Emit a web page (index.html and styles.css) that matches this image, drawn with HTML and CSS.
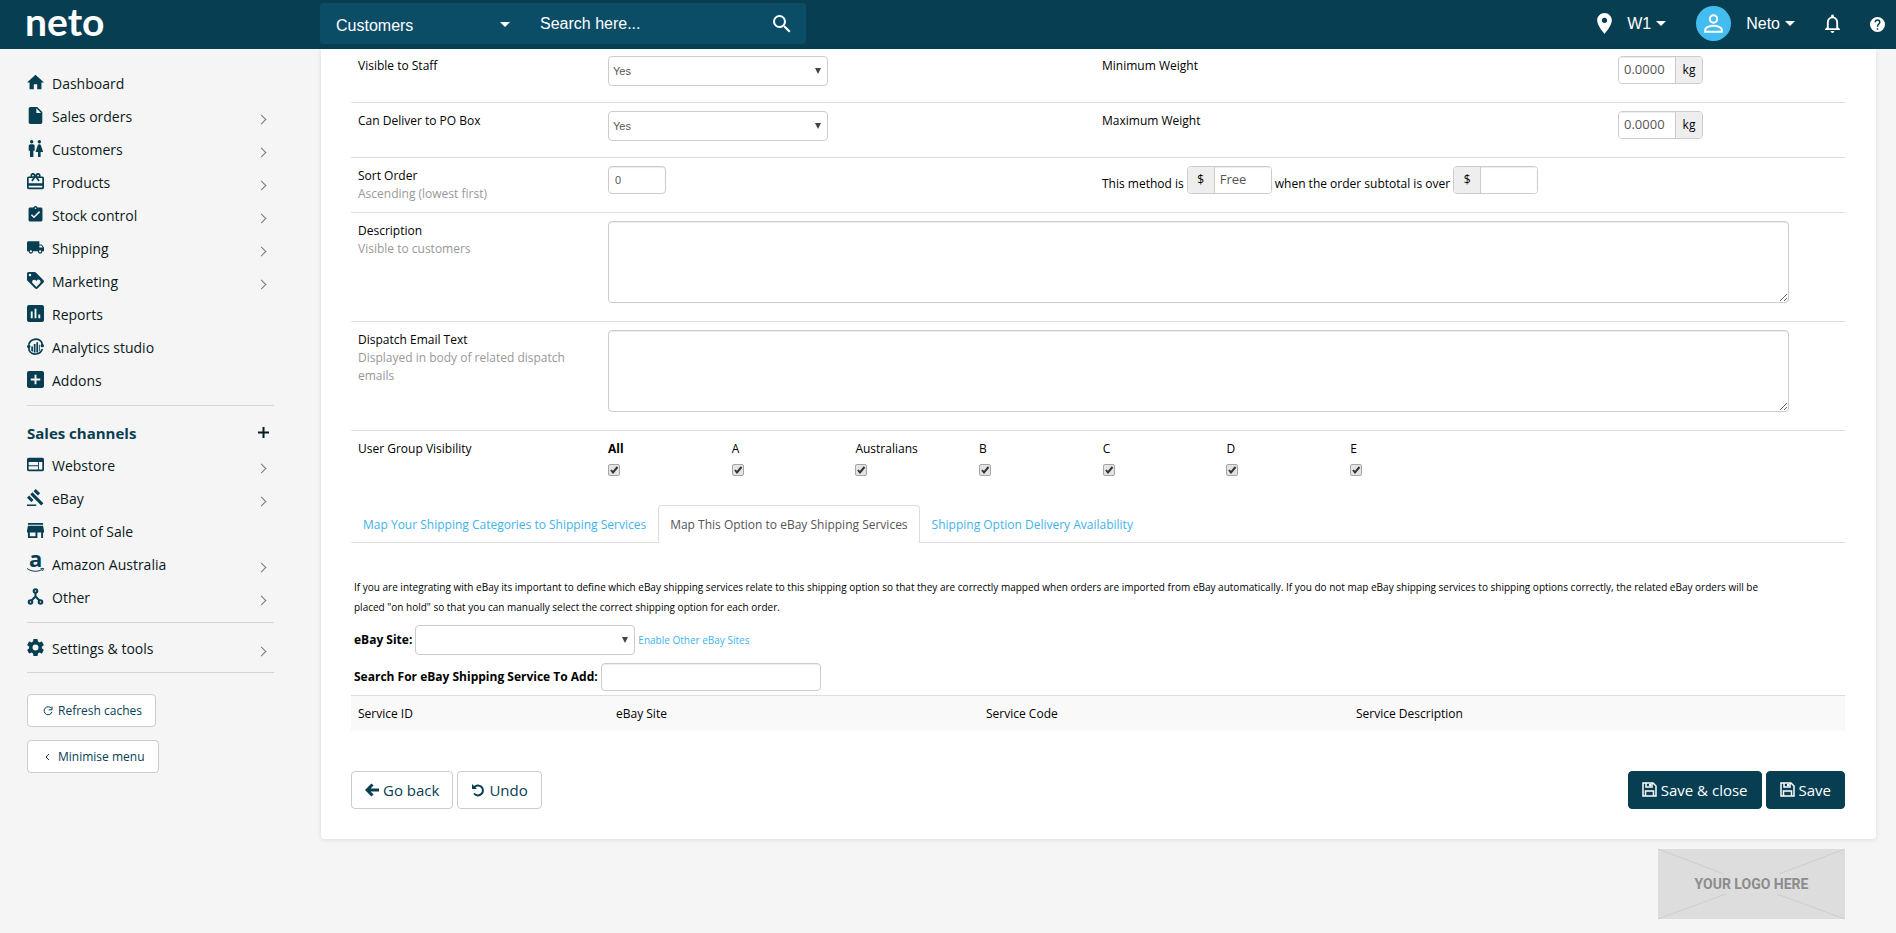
FILE: index.html
```html
<!DOCTYPE html>
<html lang="en">
<head>
  <meta charset="UTF-8">
  <meta name="viewport" content="width=device-width, initial-scale=1.0">
  <title>Neto - Shipping Option</title>
  <link rel="stylesheet" href="styles.css">
</head>
<body>
  <!-- Top bar -->
  <header class="topbar">
    <a href="#" class="brand">neto</a>
    <form class="search">
      <select class="search-type" aria-label="Search in">
        <option>Customers</option>
      </select>
      <input type="text" class="search-input" placeholder="Search here..." aria-label="Search">
      <button type="button" class="search-btn" aria-label="Search">
        <svg width="18" height="18" viewBox="3 3 18 18" fill="#fff"><path d="M15.5 14h-.79l-.28-.27A6.47 6.47 0 0 0 16 9.500 6.500 6.500 0 1 0 9.500 16c1.610 0 3.090-.590 4.230-1.570l.270.280v.790l5 4.990L20.490 19l-4.990-5zm-6 0C7.010 14 5 11.990 5 9.500S7.010 5 9.500 5 14 7.010 14 9.500 11.990 14 9.500 14z"/></svg>
      </button>
    </form>
    <nav class="top-nav">
      <a href="#" class="top-link warehouse">
        <svg width="15" height="21" viewBox="5 2 14 20" fill="#fff"><path d="M12 2C8.130 2 5 5.130 5 9c0 5.250 7 13 7 13s7-7.750 7-13c0-3.870-3.130-7-7-7zm0 9.500a2.500 2.500 0 1 1 0-5 2.500 2.500 0 0 1 0 5z"/></svg>
        <span>W1<i class="caret"></i></span>
      </a>
      <a href="#" class="top-link account">
        <span class="avatar">
          <svg width="19" height="19" viewBox="0 0 19 19" fill="none" stroke="#fff" stroke-width="2"><circle cx="9.500" cy="5" r="3.700"/><path d="M1.200 17.800v-2c0-2.600 4.800-4 8.300-4s8.300 1.400 8.300 4v2z"/></svg>
        </span>
        <span>Neto<i class="caret"></i></span>
      </a>
      <a href="#" class="top-link bell" aria-label="Notifications">
        <svg width="15" height="19" viewBox="4 2 16 20" fill="#fff"><path d="M12 22c1.100 0 2-.900 2-2h-4c0 1.100.900 2 2 2zm6-6v-5c0-3.070-1.630-5.640-4.500-6.320V4a1.500 1.500 0 0 0-3 0v.680C7.640 5.360 6 7.920 6 11v5l-2 2v1h16v-1l-2-2zm-2 1H8v-6c0-2.480 1.510-4.500 4-4.500s4 2.020 4 4.500v6z"/></svg>
      </a>
      <a href="#" class="top-link help" aria-label="Help">
        <svg width="15" height="15" viewBox="2 2 20 20" fill="#fff"><path d="M12 2a10 10 0 1 0 0 20 10 10 0 0 0 0-20zm1 17h-2v-2h2v2zm2.070-7.750-.900.920C13.450 12.900 13 13.500 13 15h-2v-.500c0-1.100.450-2.100 1.170-2.830l1.240-1.260c.370-.360.590-.860.590-1.410a2 2 0 0 0-4 0H8a4 4 0 0 1 8 0c0 .880-.360 1.680-.930 2.250z"/></svg>
      </a>
    </nav>
  </header>

  <div class="layout">
    <!-- Side menu -->
    <aside class="sidebar">
      <ul class="menu">
        <li><a href="#"><svg viewBox="2 2 20 20"><path d="M10 20v-6h4v6h5v-8h3L12 3 2 12h3v8z"/></svg>Dashboard</a></li>
        <li><a href="#" class="more"><svg viewBox="2 2 20 20"><path d="M6 2c-1.100 0-2 .900-2 2v16c0 1.100.900 2 2 2h12c1.100 0 2-.900 2-2V8l-6-6H6zm7 7V3.500L18.500 9H13z"/></svg>Sales orders</a></li>
        <li><a href="#" class="more"><svg viewBox="2 2 20 20"><path d="M5.500 22v-7.500H4V9c0-1.100.900-2 2-2h3c1.100 0 2 .900 2 2v5.500H9.500V22h-4zM18 22v-6h3l-2.540-7.630A2.010 2.010 0 0 0 16.560 7h-.120a2 2 0 0 0-1.900 1.370L12 16h3v6h3zM7.500 6a2 2 0 1 0 0-4 2 2 0 0 0 0 4zm9 0a2 2 0 1 0 0-4 2 2 0 0 0 0 4z"/></svg>Customers</a></li>
        <li><a href="#" class="more"><svg viewBox="2 2 20 20"><path d="M20 6h-2.180c.110-.310.180-.650.180-1a3 3 0 0 0-5.500-1.650l-.500.670-.500-.680A3 3 0 0 0 6 5c0 .350.070.690.180 1H4c-1.110 0-1.990.890-1.990 2L2 19c0 1.110.890 2 2 2h16c1.110 0 2-.890 2-2V8c0-1.110-.890-2-2-2zm-5-2a1 1 0 1 1 0 2 1 1 0 0 1 0-2zM9 4a1 1 0 1 1 0 2 1 1 0 0 1 0-2zm11 15H4v-2h16v2zm0-5H4V8h5.080L7 10.830 8.620 12 11 8.760l1-1.360 1 1.360L15.380 12 17 10.830 14.920 8H20v6z"/></svg>Products</a></li>
        <li><a href="#" class="more"><svg viewBox="1 1 22 22"><path d="M19 3h-4.180a3 3 0 0 0-5.640 0H5c-1.100 0-2 .900-2 2v14c0 1.100.900 2 2 2h14c1.100 0 2-.900 2-2V5c0-1.100-.900-2-2-2zm-7 0a1 1 0 1 1 0 2 1 1 0 0 1 0-2zm-2 14-4-4 1.410-1.410L10 14.170l6.590-6.590L18 9l-8 8z"/></svg>Stock control</a></li>
        <li><a href="#" class="more"><svg viewBox="1 1 22 22"><path d="M20 8h-3V4H3c-1.100 0-2 .900-2 2v11h2a3 3 0 0 0 6 0h6a3 3 0 0 0 6 0h2v-5l-3-4zM6 18.500a1.500 1.500 0 1 1 0-3 1.500 1.500 0 0 1 0 3zm13.500-9 1.960 2.500H17V9.500h2.500zm-1.500 9a1.500 1.500 0 1 1 0-3 1.500 1.500 0 0 1 0 3z"/></svg>Shipping</a></li>
        <li><a href="#" class="more"><svg viewBox="2 2 20 20"><path d="m21.410 11.580-9-9C12.050 2.220 11.550 2 11 2H4c-1.100 0-2 .900-2 2v7c0 .550.220 1.050.590 1.420l9 9c.360.360.860.580 1.410.580s1.050-.220 1.410-.590l7-7c.370-.360.590-.860.590-1.410s-.230-1.060-.590-1.420zM5.500 7a1.500 1.500 0 1 1 0-3 1.500 1.500 0 0 1 0 3zm11.770 8.270L13 19.540l-4.270-4.270A2.500 2.500 0 0 1 10.500 11c.690 0 1.320.280 1.770.740l.730.720.730-.730a2.500 2.500 0 0 1 3.540 3.540z"/></svg>Marketing</a></li>
        <li><a href="#"><svg viewBox="3 3 18 18"><path d="M19 3H5c-1.100 0-2 .900-2 2v14c0 1.100.900 2 2 2h14c1.100 0 2-.900 2-2V5c0-1.100-.900-2-2-2zM9 17H7v-7h2v7zm4 0h-2V7h2v10zm4 0h-2v-4h2v4z"/></svg>Reports</a></li>
        <li><a href="#"><svg viewBox="2 2 20 20"><path d="M7 12h2v6H8l-1-1zM10 9h2v10h-2zM13 7h2v12h-2zM16 10h1v7l-1 1z"/><path d="M4 10a8.500 8.500 0 0 1 15.500-2.500L20 12M20 15a8.500 8.500 0 0 1-15.500 1.500L4 12" fill="none" stroke="#073e52" stroke-width="2"/><circle cx="4" cy="12" r="2"/><circle cx="20" cy="11" r="2"/></svg>Analytics studio</a></li>
        <li><a href="#"><svg viewBox="3 3 18 18"><path d="M19 3H5a2 2 0 0 0-2 2v14c0 1.100.890 2 2 2h14c1.100 0 2-.900 2-2V5c0-1.100-.900-2-2-2zm-2 10h-4v4h-2v-4H7v-2h4V7h2v4h4v2z"/></svg>Addons</a></li>
      </ul>

      <h2 class="menu-title">Sales channels
        <button type="button" class="add-channel" aria-label="Add sales channel"><svg width="11" height="11" viewBox="0 0 11 11"><path d="M5.500 0v11M0 5.500h11" stroke="#0b1a20" stroke-width="2"/></svg></button>
      </h2>
      <ul class="menu channels">
        <li><a href="#" class="more"><svg viewBox="2 2 20 20"><path d="M20 4H4c-1.100 0-2 .900-2 2v12c0 1.100.900 2 2 2h16c1.100 0 2-.900 2-2V6c0-1.100-.900-2-2-2zm-5 14H4v-4h11v4zm0-5H4V9h11v4zm5 5h-4V9h4v9z"/></svg>Webstore</a></li>
        <li><a href="#" class="more"><svg viewBox="1 1 22 22"><path d="M1 21h12v2H1zM5.240 8.070l2.830-2.830 14.140 14.150-2.830 2.830zM12.320 1l5.660 5.660-2.830 2.830-5.660-5.660zM3.830 9.480l5.660 5.660-2.830 2.830L1 12.310z"/></svg>eBay</a></li>
        <li><a href="#"><svg viewBox="3 3 18 18"><path d="M20 4H4v2h16V4zm1 10v-2l-1-5H4l-1 5v2h1v6h10v-6h4v6h2v-6h1zm-9 4H6v-4h6v4z"/></svg>Point of Sale</a></li>
        <li><a href="#" class="more"><svg viewBox="0 0 17 17"><text x="2" y="12" class="amazon-a">a</text><path d="M0 13.500c5 3.500 11 3.400 15 1.100M13.500 13.700l3-.200-1 2.500" fill="none" stroke="#073e52"/></svg>Amazon Australia</a></li>
        <li><a href="#" class="more"><svg viewBox="0 0 17 17"><g fill="none" stroke="#073e52" stroke-width="2"><circle cx="8.500" cy="3" r="1.800"/><circle cx="3.500" cy="14" r="1.800"/><circle cx="13.500" cy="14" r="1.800"/><path d="M8.500 5v4M8.500 8.500l-4 4M8.500 8.500l4 4"/></g></svg>Other</a></li>
      </ul>
      <ul class="menu settings">
        <li><a href="#" class="more"><svg viewBox="2 2 20 20"><path d="M19.430 12.980c.040-.320.070-.640.070-.980s-.030-.660-.070-.980l2.110-1.650c.190-.150.240-.420.120-.640l-2-3.460c-.120-.220-.390-.300-.610-.220l-2.490 1c-.520-.400-1.080-.730-1.690-.980l-.380-2.650A.488.488 0 0 0 14 2h-4c-.250 0-.460.180-.490.420l-.380 2.650c-.610.250-1.170.590-1.690.980l-2.490-1c-.230-.090-.490 0-.610.220l-2 3.460c-.130.220-.070.490.120.640l2.110 1.650c-.040.320-.070.650-.070.980s.030.660.070.980l-2.110 1.650c-.190.150-.240.420-.120.640l2 3.460c.120.220.390.300.610.220l2.490-1c.520.400 1.080.730 1.690.980l.380 2.650c.030.240.240.420.490.420h4c.250 0 .460-.180.490-.420l.380-2.650c.610-.250 1.170-.590 1.690-.980l2.490 1c.230.090.490 0 .610-.220l2-3.460c.120-.220.070-.490-.120-.640l-2.110-1.650zM12 15.500a3.500 3.500 0 1 1 0-7 3.500 3.500 0 0 1 0 7z"/></svg>Settings &amp; tools</a></li>
      </ul>
      <div class="side-buttons">
        <button type="button" class="btn btn-small"><svg width="10" height="10" viewBox="0 0 10 10" fill="none" stroke="#073e52"><path d="M8.300 2.300A4 4 0 1 0 9 5.800M9 .500v3.300H5.700"/></svg>Refresh caches</button>
        <button type="button" class="btn btn-small"><svg width="10" height="10" viewBox="0 0 10 10" fill="none" stroke="#073e52"><path d="M6 2 3 5l3 3"/></svg>Minimise menu</button>
      </div>
    </aside>

    <div class="page">
      <main class="panel">
        <div class="form-row">
          <label for="staff">Visible to Staff</label>
          <div><select id="staff" class="field field-wide"><option>Yes</option></select></div>
          <label for="minWeight">Minimum Weight</label>
          <div><span class="input-group"><input type="text" id="minWeight" value="0.0000"><span class="addon">kg</span></span></div>
        </div>
        <div class="form-row">
          <label for="pobox">Can Deliver to PO Box</label>
          <div><select id="pobox" class="field field-wide"><option>Yes</option></select></div>
          <label for="maxWeight">Maximum Weight</label>
          <div><span class="input-group"><input type="text" id="maxWeight" value="0.0000"><span class="addon">kg</span></span></div>
        </div>
        <div class="form-row">
          <label for="sort">Sort Order<small>Ascending (lowest first)</small></label>
          <div><input type="text" id="sort" class="field field-short" value="0"></div>
          <div class="free-over">
            <label for="freeCost">This method is</label>
            <span class="input-group"><span class="addon">$</span><input type="text" id="freeCost" value="Free"></span>
            <label for="freeOver">when the order subtotal is over</label>
            <span class="input-group"><span class="addon">$</span><input type="text" id="freeOver"></span>
          </div>
        </div>
        <div class="form-row">
          <label for="description">Description<small>Visible to customers</small></label>
          <div class="span-rest"><textarea id="description" class="field"></textarea></div>
        </div>
        <div class="form-row">
          <label for="dispatch">Dispatch Email Text<small>Displayed in body of related dispatch emails</small></label>
          <div class="span-rest"><textarea id="dispatch" class="field"></textarea></div>
        </div>
        <div class="form-row">
          <span class="row-title">User Group Visibility</span>
          <div class="span-rest groups">
            <label><b>All</b><input type="checkbox" checked></label>
            <label>A<input type="checkbox" checked></label>
            <label>Australians<input type="checkbox" checked></label>
            <label>B<input type="checkbox" checked></label>
            <label>C<input type="checkbox" checked></label>
            <label>D<input type="checkbox" checked></label>
            <label>E<input type="checkbox" checked></label>
          </div>
        </div>

        <nav class="tabs">
          <a href="#">Map Your Shipping Categories to Shipping Services</a>
          <a href="#" class="active">Map This Option to eBay Shipping Services</a>
          <a href="#">Shipping Option Delivery Availability</a>
        </nav>

        <section class="ebay">
          <p>If you are integrating with eBay its important to define which eBay shipping services relate to this shipping option so that they are correctly mapped when orders are imported from eBay automatically. If you do not map eBay shipping services to shipping options correctly, the related eBay orders will be placed "on hold" so that you can manually select the correct shipping option for each order.</p>
          <div class="ebay-line">
            <label for="ebaySite">eBay Site:</label>
            <select id="ebaySite" class="field field-wide"><option></option></select>
            <a href="#">Enable Other eBay Sites</a>
          </div>
          <div class="ebay-line">
            <label for="ebayService">Search For eBay Shipping Service To Add:</label>
            <input type="text" id="ebayService" class="field field-wide">
          </div>
        </section>

        <table class="services">
          <thead>
            <tr>
              <th class="col-id">Service ID</th>
              <th class="col-mid">eBay Site</th>
              <th class="col-mid">Service Code</th>
              <th>Service Description</th>
            </tr>
          </thead>
        </table>

        <div class="actions">
          <button type="button" class="btn"><svg width="14" height="14" viewBox="0 0 14 14"><path d="M7.500 1.500 2 7l5.500 5.500M2.500 7H14" fill="none" stroke="#073e52" stroke-width="3"/></svg>Go back</button>
          <button type="button" class="btn"><svg width="14" height="14" viewBox="0 0 14 14"><path d="M1 1v5h5L4.300 4.300z" fill="#073e52"/><path d="M3 4.300A5 5 0 1 1 3 10.500" fill="none" stroke="#073e52" stroke-width="2"/></svg>Undo</button>
          <button type="button" class="btn btn-primary push"><svg width="15" height="15" viewBox="0 0 15 15" fill="none" stroke="#fff" stroke-width="1.500"><path d="M1 1h10l3 3v10H1zM4 1v4h6V1M3.500 14V9h8v5"/><path d="M8 2v2" stroke-width="2"/></svg>Save &amp; close</button>
          <button type="button" class="btn btn-primary"><svg width="15" height="15" viewBox="0 0 15 15" fill="none" stroke="#fff" stroke-width="1.500"><path d="M1 1h10l3 3v10H1zM4 1v4h6V1M3.500 14V9h8v5"/><path d="M8 2v2" stroke-width="2"/></svg>Save</button>
        </div>
      </main>

      <footer class="footer">
        <div class="logo-box">
          <svg width="187" height="70" viewBox="0 0 187 70" stroke="#cecece"><path d="M0 0l66 25M187 0l-66 25M0 70l68-25M187 70l-68-25"/></svg>
          <span>YOUR LOGO HERE</span>
        </div>
      </footer>
    </div>
  </div>
</body>
</html>
```
FILE: styles.css
```css
* {
  margin: 0;
  padding: 0;
  box-sizing: border-box;
}

body {
  font-family: "Open Sans", "Noto Sans", sans-serif;
  font-size: 12px;
  line-height: 18px;
  color: #000;
  background: #f5f5f5;
}

a {
  color: #41b3ea;
  text-decoration: none;
}

ul {
  list-style: none;
}

button,
input,
select,
textarea {
  font-family: inherit;
}

button {
  cursor: pointer;
}

/* top bar */
.topbar {
  display: flex;
  align-items: center;
  height: 49px;
  padding-right: 11px;
  background: #073e52;
  font-family: "Liberation Sans", Arial, sans-serif;
  font-size: 16px;
}

.brand {
  width: 320px;
  padding: 0 0 8px 25px;
  font-family: Lato, sans-serif;
  font-size: 39px;
  font-weight: 700;
  line-height: 40px;
  color: #fff;
}

.search {
  display: flex;
  width: 486px;
  height: 41px;
  margin-bottom: 2px;
  border-radius: 4px;
  background: #0b4d66;
}

.search-type,
.search-input {
  border: 0;
  outline: 0;
  background: transparent;
  color: #fff;
  font-size: 16px;
}

.search-type {
  appearance: none;
  width: 204px;
  padding: 3px 0 0 16px;
  background: url("data:image/svg+xml,%3Csvg xmlns='http://www.w3.org/2000/svg' width='10' height='5'%3E%3Cpath d='M0 0h10L5 5z' fill='%23fff'/%3E%3C/svg%3E") no-repeat 180px 19px;
}

.search-input {
  flex: 1;
  min-width: 0;
  padding-left: 16px;
}

.search-input::placeholder {
  color: #fff;
}

.search-btn {
  width: 48px;
  border: 0;
  background: transparent;
}

.search-btn svg {
  display: block;
  margin-left: 15px;
}

.top-nav {
  display: flex;
  align-items: center;
  margin-left: auto;
  padding-bottom: 2px;
}

.top-link {
  display: flex;
  align-items: center;
  color: #fff;
}

.warehouse {
  gap: 15px;
}

.account {
  gap: 15px;
  margin-left: 30px;
}

.bell,
.help {
  margin-left: 30px;
}

.help {
  padding-top: 2px;
}

.avatar {
  display: flex;
  align-items: center;
  justify-content: center;
  width: 35px;
  height: 35px;
  border-radius: 50%;
  background: #43bdef;
}

.caret {
  display: inline-block;
  margin-left: 5px;
  border: 5px solid transparent;
  border-top-color: #fff;
  border-bottom: 0;
  vertical-align: 3px;
}

/* page layout */
.layout {
  display: flex;
}

.sidebar {
  flex: 0 0 321px;
  padding: 18px 47px 0 27px;
}

.page {
  flex: 1;
  min-width: 0;
  padding-right: 20px;
}

/* side menu */
.menu {
  padding-bottom: 8px;
  border-bottom: 1px solid #d5d5d5;
}

.menu a {
  display: flex;
  align-items: center;
  gap: 8px;
  height: 33px;
  padding-right: 6px;
  color: #0b1a20;
  font-size: 14px;
}

.menu svg {
  width: 17px;
  height: 17px;
  margin-bottom: 2px;
  overflow: visible;
  fill: #073e52;
}

.menu .more::after {
  content: "";
  width: 6px;
  height: 6px;
  margin: 5px 3px 0 auto;
  border: solid #777;
  border-width: 1px 1px 0 0;
  transform: rotate(45deg);
}

.amazon-a {
  font: 700 22px "Open Sans", sans-serif;
}

.menu-title {
  display: flex;
  align-items: center;
  justify-content: space-between;
  height: 33px;
  margin-top: 10px;
  padding-right: 5px;
  font-size: 15px;
  color: #073e52;
}

.add-channel {
  border: 0;
  background: none;
}

.add-channel svg {
  display: block;
}

.settings {
  padding: 9px 0 7px;
}

.side-buttons {
  display: flex;
  flex-direction: column;
  align-items: flex-start;
  gap: 13px;
  margin-top: 21px;
}

/* buttons */
.btn {
  display: flex;
  align-items: center;
  gap: 4px;
  height: 38px;
  padding: 0 13px;
  border: 1px solid #ccc;
  border-radius: 4px;
  background: #fff;
  color: #073e52;
  font-size: 15px;
}

.btn-small {
  height: 33px;
  gap: 5px;
  padding: 0 13px 0 15px;
  font-size: 12px;
}

.btn-primary {
  border-color: #073e52;
  background: #073e52;
  color: #fff;
}

/* main panel */
.panel {
  padding: 0 31px 30px 30px;
  border-radius: 0 0 4px 4px;
  background: #fff;
  box-shadow: 0 1px 5px rgba(0, 0, 0, 0.1);
}

.form-row {
  display: grid;
  grid-template-columns: 250fr 494fr 516fr 234fr;
  min-height: 55px;
  padding: 8px 0 9px;
  border-top: 1px solid #ddd;
}

.form-row:first-child {
  min-height: 53px;
  padding-top: 7px;
  border-top: 0;
}

.form-row > * {
  min-width: 0;
  padding: 0 7px;
}

.form-row > label,
.row-title {
  padding-top: 1px;
}

.form-row small {
  display: block;
  font-size: 12px;
  color: #999;
}

.form-row > label:first-child {
  padding-right: 28px;
}

.span-rest {
  grid-column: 2 / -1;
}

.field {
  display: block;
  height: 28px;
  padding: 0 6px;
  border: 1px solid #ccc;
  border-radius: 4px;
  background-color: #fff;
  color: #555;
  font: 11px "Liberation Sans", Arial, sans-serif;
}

input.field,
textarea.field {
  box-shadow: inset 0 1px 1px rgba(0, 0, 0, 0.08);
}

.field-wide {
  width: 220px;
}

.field-short {
  width: 58px;
}

select.field {
  appearance: none;
  height: 30px;
  padding: 0 4px;
  background: #fff url("data:image/svg+xml,%3Csvg xmlns='http://www.w3.org/2000/svg' width='6' height='6'%3E%3Cpath d='M0 0h6L3 6z' fill='%23444'/%3E%3C/svg%3E") no-repeat right 6px center;
}

textarea.field {
  width: 96%;
  height: 82px;
  margin-bottom: 9px;
}

.input-group {
  display: inline-flex;
  height: 28px;
  overflow: hidden;
  border: 1px solid #ccc;
  border-radius: 4px;
}

.input-group input {
  width: 56px;
  padding: 0 5px 2px;
  border: 0;
  outline: 0;
  box-shadow: inset 0 1px 1px rgba(0, 0, 0, 0.08);
  color: #555;
  font-size: 13px;
}

.addon {
  display: flex;
  align-items: center;
  justify-content: center;
  width: 27px;
  background: #eee;
  border-left: 1px solid #ccc;
}

.addon:first-child {
  border-left: 0;
  border-right: 1px solid #ccc;
}

.free-over {
  display: flex;
  grid-column: 3 / -1;
  gap: 3px;
}

.free-over label {
  padding-top: 9px;
}

.groups {
  display: grid;
  grid-template-columns: repeat(10, 1fr);
  padding-right: 0;
}

.groups label {
  padding-top: 1px;
}

.groups input {
  display: block;
  appearance: none;
  width: 12px;
  height: 12px;
  margin-top: 6px;
  border: 1px solid #a5a5a5;
  border-radius: 2px;
  background: #e4e4e4;
}

.groups input:checked {
  background: #e4e4e4 url("data:image/svg+xml,%3Csvg xmlns='http://www.w3.org/2000/svg' width='10' height='10'%3E%3Cpath d='M2 5l2 2.500L8.500 2' fill='none' stroke='%23333' stroke-width='2'/%3E%3C/svg%3E") no-repeat center;
}

/* tabs */
.tabs {
  display: flex;
  margin-top: 20px;
  border-bottom: 1px solid #ddd;
}

.tabs a {
  height: 37px;
  padding: 10px 11px;
  border: 1px solid transparent;
  border-bottom: 0;
  border-radius: 4px 4px 0 0;
}

.tabs .active {
  height: 38px;
  margin-bottom: -1px;
  border-color: #ddd;
  background: #fff;
  color: #555;
}

.ebay {
  display: flex;
  flex-direction: column;
  gap: 8px;
  padding: 34px 3px 4px;
}

.ebay p {
  padding-right: 72px;
  font-size: 10px;
  line-height: 20px;
}

.ebay-line {
  display: flex;
  align-items: center;
  gap: 3px;
}

.ebay-line label {
  font-weight: 700;
}

.ebay-line a {
  font-size: 10px;
}

.services {
  width: 100%;
  border-collapse: collapse;
  table-layout: fixed;
}

.services th {
  height: 35px;
  padding: 2px 7px 0;
  border-top: 1px solid #ddd;
  background: #f9f9f9;
  font-weight: 400;
  text-align: left;
}

.col-id {
  width: 258px;
}

.col-mid {
  width: 370px;
}

.actions {
  display: flex;
  gap: 4px;
  margin-top: 40px;
}

.push {
  margin-left: auto;
}

.footer {
  display: flex;
  justify-content: flex-end;
  padding: 10px 31px 15px 0;
}

.logo-box {
  display: grid;
  place-items: center;
  background: #ddd;
}

.logo-box svg,
.logo-box span {
  grid-area: 1 / 1;
}

.logo-box span {
  font: 700 14px Roboto, sans-serif;
  color: #8c8c8c;
}
```
